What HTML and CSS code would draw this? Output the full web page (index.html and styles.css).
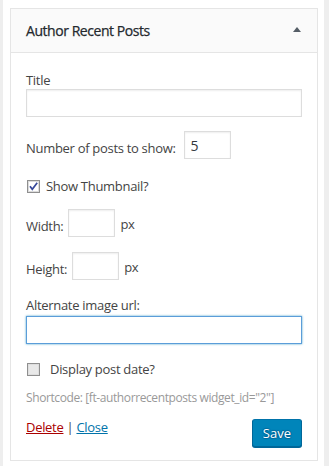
FILE: index.html
```html
<!DOCTYPE html>
<html lang="en">
<head>
<meta charset="utf-8">
<title>Author Recent Posts widget</title>
<link rel="stylesheet" href="styles.css">
</head>
<body>
<div class="panel">
  <div class="widget">
    <div class="widget-top">
      <h3 class="widget-title">Author Recent Posts</h3>
      <span class="toggle-arrow" aria-hidden="true"></span>
    </div>
    <form class="widget-inside">
      <div class="field field-title">
        <label class="label-block">Title</label>
        <input class="text-input wide" type="text" value="">
      </div>
      <div class="field inline-row row-number">
        <label class="inline-label">Number of posts to show:</label>
        <input class="text-input small" type="text" value="5">
      </div>
      <div class="field check-row row-thumb">
        <svg class="checkbox" width="13" height="13" viewBox="0 0 13 13" aria-hidden="true">
          <rect x="0.5" y="0.5" width="12" height="12" fill="#f4f4f4" stroke="#8f8f8f"/>
          <rect x="1.5" y="1.5" width="10" height="10" fill="#ffffff" stroke="#dcdcdc"/>
          <path d="M3 6.2 L5.3 9.3 L10.2 2.8" fill="none" stroke="#36489a" stroke-width="1.7"/>
        </svg>
        <span class="check-label gap-sm">Show Thumbnail?</span>
      </div>
      <div class="field inline-row row-width">
        <label class="inline-label">Width:</label>
        <input class="text-input small" type="text" value="">
        <span class="unit">px</span>
      </div>
      <div class="field inline-row row-height">
        <label class="inline-label">Height:</label>
        <input class="text-input small" type="text" value="">
        <span class="unit">px</span>
      </div>
      <div class="field field-alt">
        <label class="label-block">Alternate image url:</label>
        <input class="text-input wide focused" type="text" value="">
      </div>
      <div class="field check-row row-date">
        <svg class="checkbox" width="13" height="13" viewBox="0 0 13 13" aria-hidden="true">
          <rect x="0.5" y="0.5" width="12" height="12" fill="#f4f4f4" stroke="#8f8f8f"/>
          <rect x="1.5" y="1.5" width="10" height="10" fill="#e9e9e9" stroke="#dedede"/>
        </svg>
        <span class="check-label gap-lg">Display post date?</span>
      </div>
      <p class="shortcode">Shortcode: [ft-authorrecentposts widget_id="2"]</p>
      <div class="widget-control-actions">
        <div class="links">
          <a class="link-delete" href="#">Delete</a> <span class="sep">|</span> <a class="link-close" href="#">Close</a>
        </div>
        <button class="button-primary" type="button">Save</button>
      </div>
    </form>
  </div>
</div>
</body>
</html>
```

FILE: styles.css
```css
html, body {
  margin: 0;
  padding: 0;
}
body {
  background: #eeeeee;
  font-family: "Open Sans", "Noto Sans", sans-serif;
  font-size: 13px;
  letter-spacing: -0.3px;
  color: #444;
  width: 329px;
  height: 466px;
  overflow: hidden;
}
.panel {
  margin-left: 3px;
  width: 321px;
  height: 466px;
  background: #fff;
  padding: 8px 0 0 7px;
  box-sizing: border-box;
}
.widget {
  width: 308px;
  box-sizing: border-box;
  border: 1px solid #e5e5e5;
  background: #fff;
}
.widget-top {
  height: 43px;
  background: #fafafa;
  border-bottom: 1px solid #e5e5e5;
  display: flex;
  align-items: center;
  justify-content: space-between;
  padding: 0 16px 0 15px;
}
.widget-title {
  margin: 0;
  font-size: 14px;
  font-weight: 500;
  letter-spacing: -0.45px;
  -webkit-text-stroke: 0.25px #23282d;
  color: #23282d;
  line-height: 18px;
  padding-top: 1px;
}
.toggle-arrow {
  width: 0;
  height: 0;
  border-left: 4px solid transparent;
  border-right: 4px solid transparent;
  border-bottom: 5px solid #555d66;
  margin-top: -3px;
}
.widget-inside {
  padding: 18px 15px 13px;
  margin: 0;
}
.field {
  margin: 0;
}
.label-block {
  display: block;
  line-height: 18px;
}
.text-input {
  box-sizing: border-box;
  height: 28px;
  border: 1px solid #ddd;
  box-shadow: inset 0 1px 2px rgba(0,0,0,.07);
  background: #fff;
  color: #32373c;
  font-family: inherit;
  font-size: 14px;
  letter-spacing: 0;
  padding: 0 6px;
  margin: 0;
  outline: none;
  border-radius: 0;
}
.text-input.wide {
  display: block;
  width: 276px;
}
.text-input.small {
  width: 47px;
}
.text-input.focused {
  border-color: #5b9dd9;
  box-shadow: 0 0 2px rgba(30,140,190,.8);
}
.inline-row {
  display: flex;
  align-items: center;
}
.inline-label {
  line-height: 18px;
  margin-top: 6px;
  margin-right: 5px;
}
.row-number .inline-label {
  margin-right: 8px;
}
.unit {
  line-height: 18px;
  margin-top: 2px;
  margin-left: 5px;
}
.row-number {
  margin-top: 14px;
}
.check-row {
  display: flex;
  align-items: center;
  height: 18px;
  padding-left: 1px;
}
.checkbox {
  display: block;
  flex: none;
}
.check-label {
  line-height: 18px;
}
.gap-sm { margin-left: 6px; }
.gap-lg { margin-left: 10px; }
.row-thumb {
  margin-top: 18px;
}
.row-width {
  margin-top: 14px;
}
.row-height {
  margin-top: 15px;
}
.field-alt {
  margin-top: 16px;
}
.field-alt .label-block {
  margin-bottom: 2px;
}
.row-date {
  margin-top: 16px;
}
.shortcode {
  margin: 12px 0 0;
  font-size: 12px;
  letter-spacing: -0.4px;
  line-height: 16px;
  color: #999;
}
.widget-control-actions {
  margin-top: 13px;
  display: flex;
  justify-content: space-between;
  align-items: flex-start;
}
.links {
  line-height: 18px;
  margin-top: -1px;
}
.link-delete {
  color: #a00;
  text-decoration: underline;
}
.link-close {
  color: #0073aa;
  text-decoration: underline;
}
.sep {
  color: #444;
}
.button-primary {
  height: 28px;
  box-sizing: border-box;
  padding: 0 10px 1px;
  background: #0085ba;
  border: 1px solid #0073aa;
  border-color: #0073aa #006799 #006799;
  box-shadow: 0 1px 0 #006799;
  border-radius: 3px;
  color: #fff;
  text-shadow: 0 -1px 1px #006799, 1px 0 1px #006799, 0 1px 1px #006799, -1px 0 1px #006799;
  font-family: inherit;
  font-size: 13px;
  letter-spacing: 0;
  line-height: 26px;
  cursor: pointer;
}
```
